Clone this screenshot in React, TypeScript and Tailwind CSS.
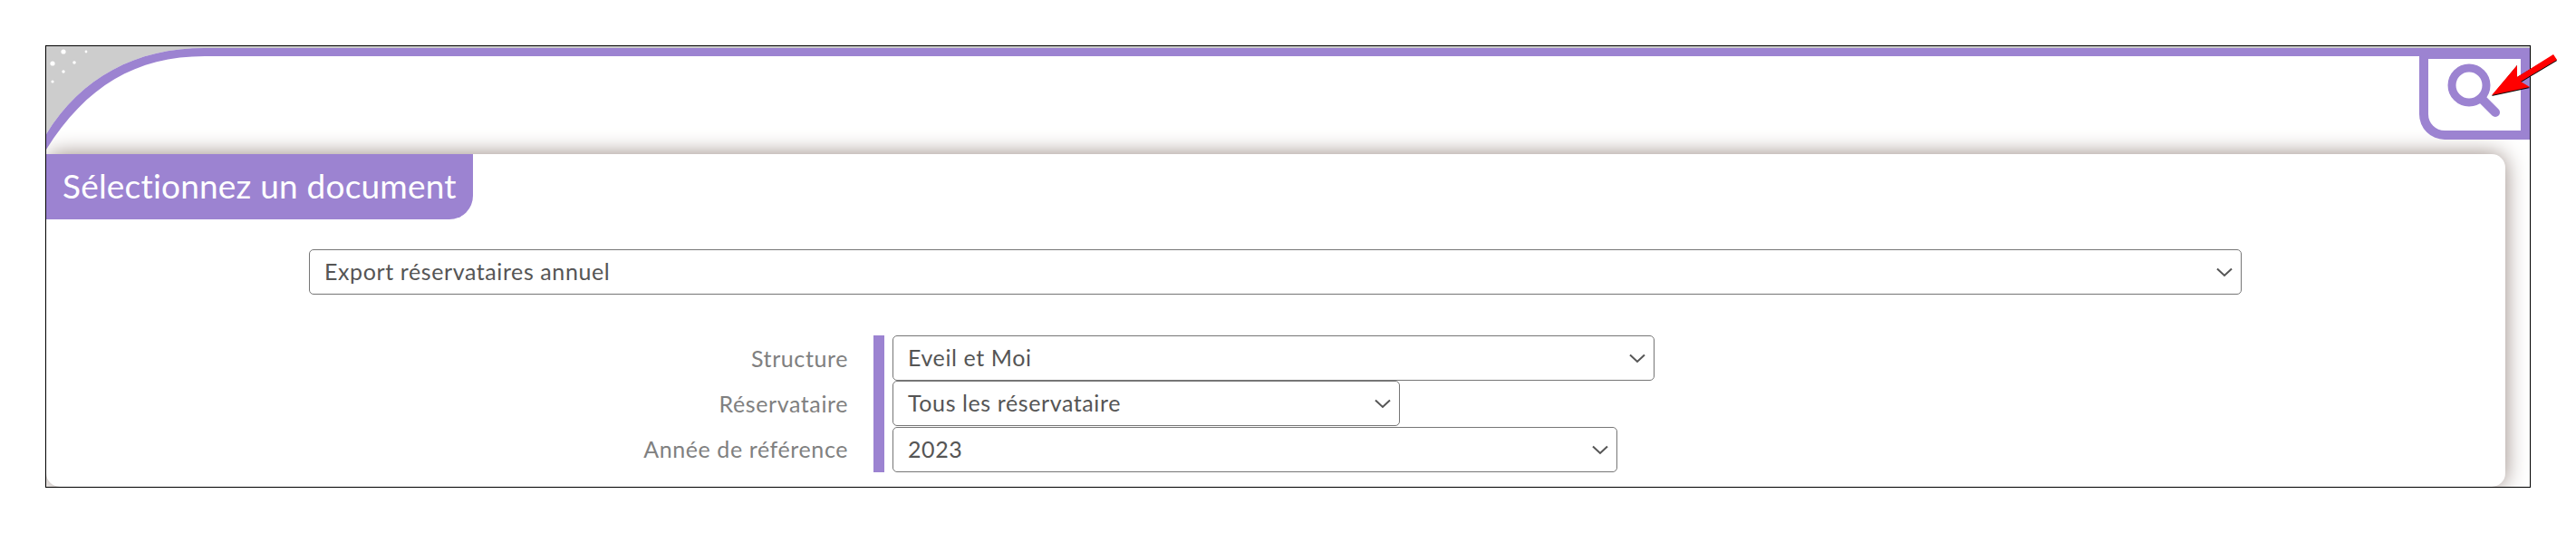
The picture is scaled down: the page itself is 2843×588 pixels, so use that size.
const Chevron = () => (
  <svg width="18" height="11" viewBox="0 0 18 11" className="shrink-0" fill="none">
    <path d="M1 1.5 L9 9 L17 1.5" stroke="#555555" strokeWidth="2" />
  </svg>
);

const Select = ({ label, className }: { label: string; className: string }) => (
  <div className={`flex items-center justify-between h-[50px] pl-[16px] pr-[9px] border border-[#767676] rounded-[5px] bg-white text-[#555555] text-[25px] tracking-[0.6px] ${className}`}>
    <span>{label}</span>
    <Chevron />
  </div>
);

const dots: [number, number, number][] = [
  [70, 57, 2.6], [95, 57, 1.4], [58, 70, 2.6], [82, 69, 1.8], [70, 79, 1.7], [58, 90, 1.6],
];

export default function App() {
  return (
    <div className="w-[2843px] h-[588px] bg-white pt-[50px] pl-[50px] font-['Lato',sans-serif]">
      <div className="relative w-[2743px] h-[488px] border border-black bg-white overflow-hidden flex flex-col">
        <div className="h-[2px] shrink-0 bg-[#cdcdcd]" />
        <div className="h-[9px] shrink-0 ml-[174px] bg-[#9c83d1]" />
        <div className="relative z-10 h-[108px] shrink-0 flex justify-end items-start">
          <div className="relative w-[122px] h-[92px] border-t-[3px] border-l-[10px] border-r-[10px] border-b-[10px] border-[#9c83d1] rounded-bl-[28px] bg-white" />
        </div>
        <div className="relative w-[2714px] h-[367px] shrink-0 bg-white rounded-[15px] shadow-[0_0_24px_#96867f]">
          <div className="w-[471px] h-[72px] bg-[#9c83d1] rounded-br-[26px] pl-[18px] pb-[3px] flex items-center text-white text-[37px] tracking-[0.2px] whitespace-nowrap">
            Sélectionnez un document
          </div>
          <div className="mt-[33px] ml-[290px] w-[2133px]">
            <Select label="Export réservataires annuel" className="w-full" />
          </div>
          <div className="mt-[45px] flex">
            <div className="w-[885px] shrink-0 text-right text-[#808080] text-[25px] tracking-[0.6px]">
              <div className="h-[50px] leading-[50px]">Structure</div>
              <div className="h-[50px] leading-[50px]">Réservataire</div>
              <div className="h-[51px] leading-[51px]">Année de référence</div>
            </div>
            <div className="w-[12px] h-[151px] ml-[28px] shrink-0 bg-[#9c83d1]" />
            <div className="ml-[9px] flex flex-col">
              <Select label="Eveil et Moi" className="w-[841px]" />
              <Select label="Tous les réservataire" className="w-[560px]" />
              <Select label="2023" className="w-[800px] mt-[1px]" />
            </div>
          </div>
        </div>
        {/* corner arc drawing */}
        <svg className="absolute left-0 top-0 z-20" width="180" height="130" viewBox="51 51 180 130">
          <path d="M51 51 H226 V53 C150 53 90 85 51 148 Z" fill="#cdcdcd" />
          <path d="M51 148 C90 85 150 53 226 53 V62 C150 62 95 95 51 165 Z" fill="#9c83d1" />
          {dots.map(([x, y, r], i) => (
            <circle key={i} cx={x} cy={y} r={r} fill="#ffffff" />
          ))}
        </svg>
        {/* search glyph */}
        <svg className="absolute left-[2650px] top-[14px] z-20" width="80" height="80" viewBox="2701 65 80 80" fill="none">
          <circle cx="2725" cy="94" r="19" stroke="#9c83d1" strokeWidth="9" />
          <path d="M2739 109 L2754 124" stroke="#9c83d1" strokeWidth="10" strokeLinecap="round" />
        </svg>
      </div>
      {/* red annotation arrow */}
      <svg className="absolute left-[2740px] top-[50px] z-30" width="90" height="70" viewBox="2740 50 90 70">
        <path d="M2750 106 L2792 97 L2782 91 L2822 67 L2818 61 L2778 85 L2778 72 Z" fill="#000000" />
        <path d="M2750 105 L2792 96 L2782 90 L2822 66 L2818 60 L2778 85 L2778 72 Z" fill="#ff0000" />
      </svg>
    </div>
  );
}
